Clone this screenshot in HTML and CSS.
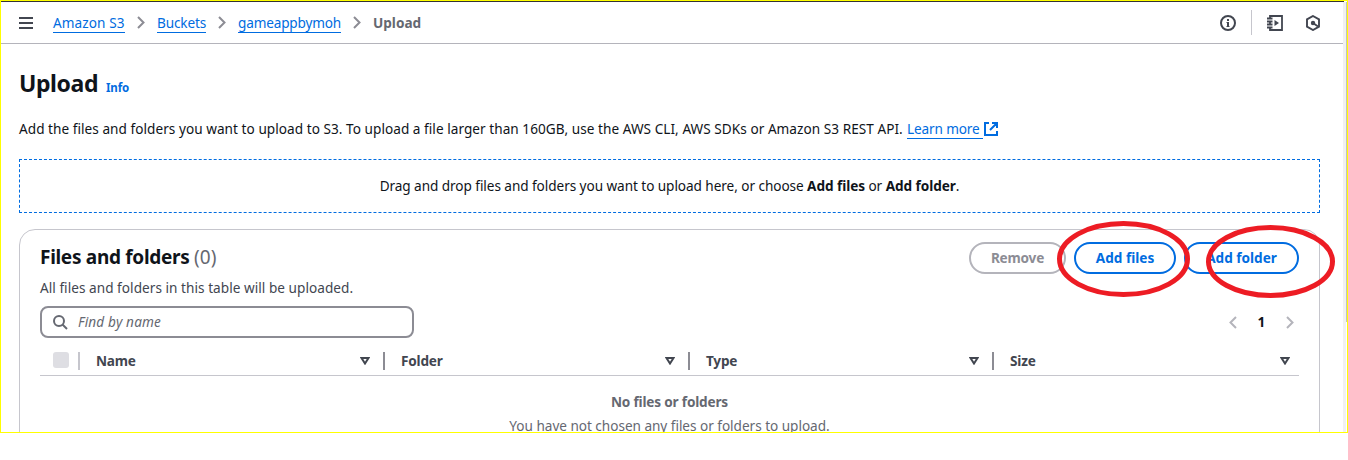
FILE: index.html
```html
<!DOCTYPE html>
<html lang="en">
<head>
<meta charset="utf-8">
<title>Upload</title>
<link rel="stylesheet" href="styles.css">
</head>
<body>
<div class="frame">
  <header class="topbar">
    <svg class="menu" width="14" height="12" viewBox="0 0 14 12"><path d="M0 1h14M0 6h14M0 11h14" stroke="#424650" stroke-width="2"/></svg>
    <nav class="crumbs">
      <a class="crumb c1">Amazon S3</a>
      <svg class="chev" width="8" height="13" viewBox="0 0 8 13"><path d="M1 1l5.5 5.5L1 12" fill="none" stroke="#8c8c94" stroke-width="2"/></svg>
      <a class="crumb c2">Buckets</a>
      <svg class="chev" width="8" height="13" viewBox="0 0 8 13"><path d="M1 1l5.5 5.5L1 12" fill="none" stroke="#8c8c94" stroke-width="2"/></svg>
      <a class="crumb c3">gameappbymoh</a>
      <svg class="chev" width="8" height="13" viewBox="0 0 8 13"><path d="M1 1l5.5 5.5L1 12" fill="none" stroke="#8c8c94" stroke-width="2"/></svg>
      <b class="here">Upload</b>
    </nav>
    <div class="tools">
      <svg width="16" height="16" viewBox="0 0 16 16" fill="none" stroke="#424650" stroke-width="2"><circle cx="8" cy="8" r="7"/><path d="M8 4v2M8 7v5" stroke-width="2"/><path d="M6.500 7.500H8M6.500 11.500h3" stroke-width="1"/></svg>
      <i class="sep"></i>
      <svg width="16" height="16" viewBox="0 0 16 16" fill="none" stroke="#424650" stroke-width="1.8"><path d="M3 4V1h12v14H3v-3M3 6.500v3M0 3.500h5.500M0 6.500h5.500M0 9.500h5.500M0 12.500h5.500"/><path d="M7.500 5v6L12 8z" fill="#424650" stroke="none"/></svg>
      <svg width="16" height="16" viewBox="0 0 16 16" fill="none" stroke="#424650" stroke-width="1.9"><path d="M8 1l6 3.400v7.200L8 15l-6-3.400V4.400z"/><circle cx="8" cy="8" r="2.200" fill="#424650" stroke="none"/><path d="M8 8l5 3.500"/></svg>
    </div>
  </header>
  <main class="page">
    <div class="title"><h1>Upload</h1><a class="info">Info</a></div>
    <p class="desc"><span class="d1">Add the files and folders you want to upload to S3. To upload a file larger than 160GB, use the AWS CLI, AWS SDKs or Amazon S3 REST API.</span><a class="learn">Learn more</a><svg width="14" height="14" viewBox="0 0 14 14" fill="none" stroke="#006ce0" stroke-width="2"><path d="M5 1H1v12h12V9M8 1h5v5M13 1L6 8"/></svg></p>
    <div class="drop">Drag and drop files and folders you want to upload here, or choose <b>Add files</b> or <b>Add folder</b>.</div>
    <section class="card">
      <div class="head">
        <h2>Files and folders <span class="count">(0)</span></h2>
        <div class="btns">
          <button class="btn off">Remove</button>
          <button class="btn b2">Add files</button>
          <button class="btn b3">Add folder</button>
        </div>
      </div>
      <p class="sub">All files and folders in this table will be uploaded.</p>
      <div class="filter">
        <div class="search"><svg width="15" height="15" viewBox="0 0 15 15" fill="none" stroke="#656871" stroke-width="2"><circle cx="6" cy="6" r="5"/><path d="M9.500 9.500l4.500 4.500"/></svg><em>Find by name</em></div>
        <div class="pager"><svg width="8" height="13" viewBox="0 0 8 13"><path d="M7 1L1.500 6.500 7 12" fill="none" stroke="#b4b4bb" stroke-width="2"/></svg><b>1</b><svg width="8" height="13" viewBox="0 0 8 13"><path d="M1 1l5.500 5.500L1 12" fill="none" stroke="#b4b4bb" stroke-width="2"/></svg></div>
      </div>
      <div class="cols">
        <div class="check"><i></i></div>
        <div class="col">Name<svg width="10" height="8" viewBox="0 0 10 8"><path d="M1.500 1h7L5 6.500z" fill="none" stroke="#424650" stroke-width="2"/></svg></div>
        <div class="col">Folder<svg width="10" height="8" viewBox="0 0 10 8"><path d="M1.500 1h7L5 6.500z" fill="none" stroke="#424650" stroke-width="2"/></svg></div>
        <div class="col">Type<svg width="10" height="8" viewBox="0 0 10 8"><path d="M1.500 1h7L5 6.500z" fill="none" stroke="#424650" stroke-width="2"/></svg></div>
        <div class="col last">Size<svg width="10" height="8" viewBox="0 0 10 8"><path d="M1.500 1h7L5 6.500z" fill="none" stroke="#424650" stroke-width="2"/></svg></div>
      </div>
      <div class="empty"><b>No files or folders</b><p>You have not chosen any files or folders to upload.</p></div>
    </section>
  </main>
  <i class="track"></i><i class="thumb"></i>
</div>
<svg class="marks" width="1348" height="460" viewBox="0 0 1348 460" fill="none" stroke="#ed1c24" stroke-width="5"><ellipse cx="1123.500" cy="259" rx="64" ry="35.500"/><ellipse cx="1270.500" cy="261.500" rx="62" ry="34"/></svg>
</body>
</html>
```
FILE: styles.css
```css
* { box-sizing: border-box; }
body { margin: 0; background: #fff; color: #0f141a; font: 13.6px/20px "Noto Sans", sans-serif; height: 460px; overflow: hidden; white-space: nowrap; }
h1, h2, p { margin: 0; }
svg { flex: none; }
.frame { position: relative; width: 1348px; height: 433px; border: 1px solid #ff0; overflow: hidden; }
.topbar { display: flex; align-items: center; height: 43px; width: 1343px; padding: 0 23px 0 18px; border-top: 1px solid #333; border-bottom: 1px solid #b4b4bb; }
.crumbs { display: flex; align-items: center; margin-left: 20px; }
.crumb { color: #006ce0; border-bottom: 1px solid #006ce0; height: 20px; line-height: 19px; }
.c1 { width: 72px; letter-spacing: 0.08px; }
.c2 { width: 49px; letter-spacing: -0.15px; }
.c3 { width: 103px; letter-spacing: -0.17px; }
.chev { margin: 0 12px; }
.here { color: #656871; }
.tools { display: flex; align-items: center; margin-left: auto; }
.sep { width: 1px; height: 25px; background: #c6c6cd; margin: 0 15px; }
.tools svg:last-child { margin-left: 22px; }
.page { padding: 24px 27px 0 18px; }
.title { display: flex; align-items: baseline; height: 31px; }
h1 { font-size: 23px; line-height: 31px; width: 87px; letter-spacing: -0.4px; }
.info { color: #006ce0; font-size: 11.5px; font-weight: 700; letter-spacing: -0.1px; }
.desc { display: flex; align-items: center; margin-top: 20px; height: 20px; letter-spacing: 0.042px; }
.d1 { width: 888px; }
.learn { color: #006ce0; border-bottom: 1px solid #006ce0; width: 76px; height: 20px; line-height: 19px; margin-right: 1px; letter-spacing: -0.13px; }
.drop { margin-top: 20px; height: 54px; border: 1px dashed #006ce0; text-align: center; line-height: 52px; letter-spacing: -0.062px; }
.card { margin-top: 16px; height: 240px; border: 1px solid #c6c6cd; border-radius: 16px; padding: 12px 20px 0; }
.head { display: flex; justify-content: space-between; height: 34px; }
h2 { font-size: 19px; line-height: 30px; letter-spacing: -0.3px; }
.count { font-weight: 400; color: #656871; letter-spacing: 0; }
.btns { display: flex; gap: 8px; }
.btn { height: 32px; border: 2px solid #006ce0; border-radius: 16px; background: #fff; color: #006ce0; font: 700 13.6px/20px "Noto Sans", sans-serif; width: 115px; padding: 0; }
.off { width: 97px; color: #8c8c94; border-color: #b4b4bb; letter-spacing: -0.2px; }
.b2 { width: 102px; }
.sub { color: #424650; margin-top: 2px; height: 28px; letter-spacing: 0.04px; }
.filter { display: flex; justify-content: space-between; align-items: center; height: 32px; }
.search { display: flex; align-items: center; width: 374px; height: 32px; border: 2px solid #8c8c94; border-radius: 8px; padding-left: 11px; gap: 10px; color: #656871; letter-spacing: 0.17px; }
.pager { display: flex; align-items: center; width: 65px; margin-right: 5px; justify-content: space-between; }
.cols { display: grid; grid-template-columns: 40px 305px 305px 304px 1fr; height: 38px; border-bottom: 1px solid #c6c6cd; align-items: center; padding-top: 8px; color: #424650; font-weight: 700; letter-spacing: -0.2px; }
.check { border-right: 2px solid #c6c6cd; height: 18px; padding-left: 13px; }
.check i { display: block; width: 16px; height: 16px; background: #dedee3; border-radius: 3px; }
.col { display: flex; align-items: center; justify-content: space-between; height: 18px; border-right: 2px solid #8c8c94; padding: 0 13px 0 16px; }
.last { border: 0; padding-right: 9px; }
.empty { text-align: center; color: #656871; padding-top: 16px; letter-spacing: -0.03px; }
.empty b { letter-spacing: -0.18px; }
.empty p { margin-top: 4px; }
.track { position: absolute; right: 1px; top: 1px; width: 3px; height: 430px; background: #f1f1f1; }
.thumb { position: absolute; right: 0; top: 1px; width: 1px; height: 320px; background: #c1c1c1; }
.marks { position: absolute; left: 0; top: 0; }
```
